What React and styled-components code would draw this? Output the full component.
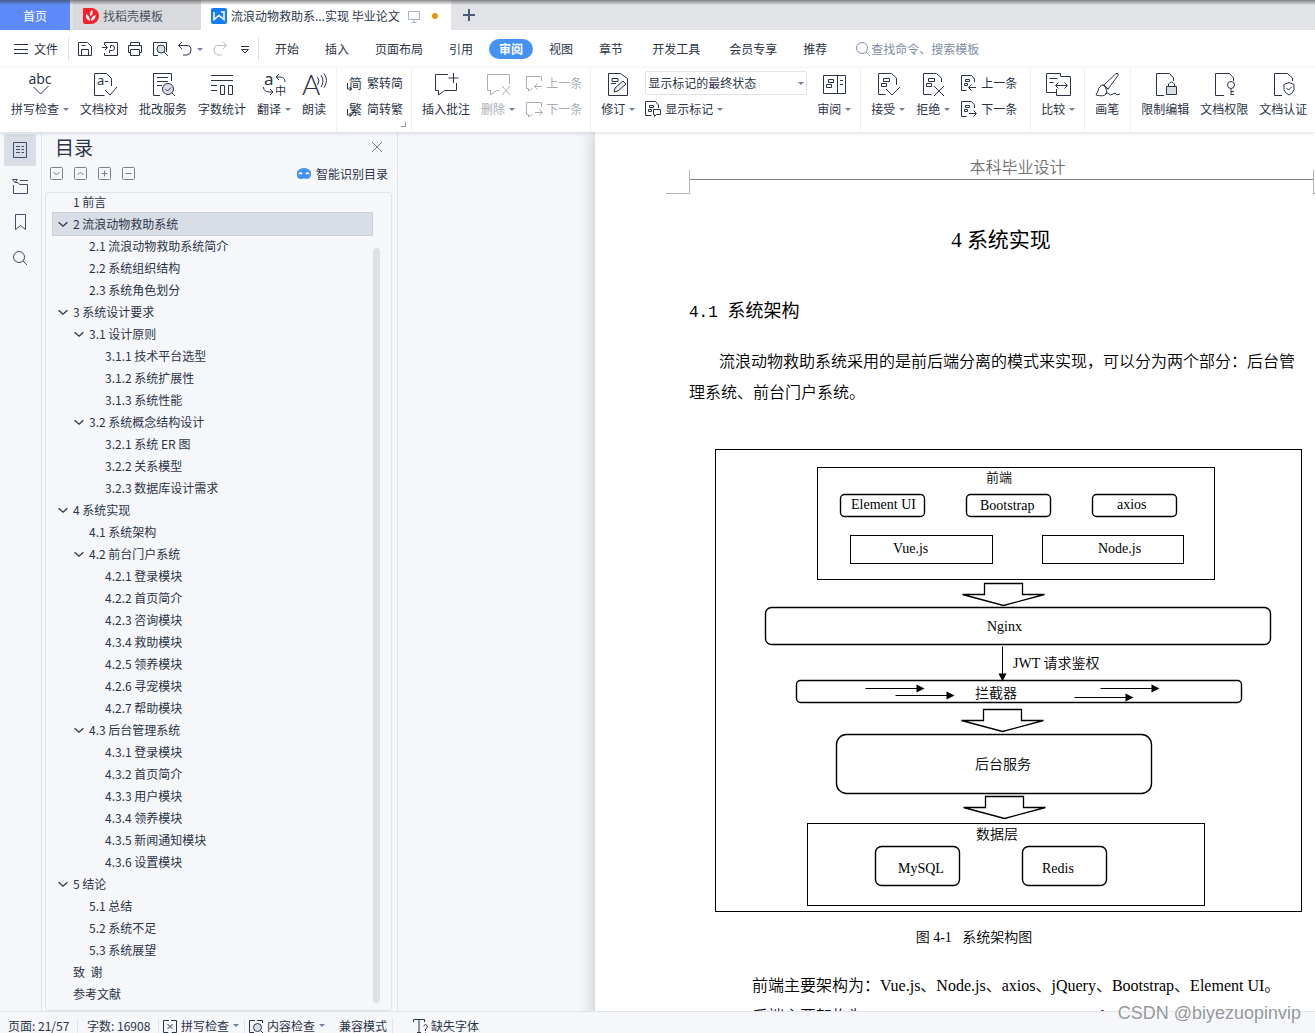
import React, { useState } from 'react';
import styled, { createGlobalStyle } from 'styled-components';

const INK = '#2b3447';
const MUTED = '#a9adb5';
const LINE = '#e1e5eb';

const GlobalStyle = createGlobalStyle`
  * {
    box-sizing: border-box;
  }
  body {
    margin: 0;
    font-family: "Noto Sans CJK SC", "Noto Sans", sans-serif;
    font-size: 12px;
    line-height: 18px;
    color: ${INK};
    background: #f5f7fa;
    overflow: hidden;
  }
  button, input, select {
    font: inherit;
    color: inherit;
    border: 0;
    padding: 0;
    background: none;
  }
`;

/* ---------- icons ---------- */

const Svg = styled.svg`
  display: block;
  flex: none;
  fill: none;
  stroke: currentColor;
  overflow: visible;
  font-family: "Noto Sans", "Noto Sans CJK SC", sans-serif;
  text {
    fill: currentColor;
    stroke: none;
  }
`;

const SHAPES = {
  // ribbon icons, 25px box
  spell: <><text x="12" y="12" fontSize="14" textAnchor="middle">abc</text><path d="M5.5 15l7 7 8-8" /></>,
  proof: <><path d="M19.500 14V6.500l-5-5h-12v22h10M13 18l5 5 7-8" /><text x="5" y="13" fontSize="13">a-</text></>,
  batch: <><path d="M9 23.5H2.5v-22h18V9M6 5.5h11M6 9.5h11M6 13.5h5" /><circle cx="17" cy="17" r="5.5" fill="#d9dee6" /><path d="M21 21l3 3M14.5 17l2 2 3.5-3.500" /></>,
  count: <path d="M1 3.5h22M1 8.5h22M1 13.5h6M1 18.5h6M10.5 13.5h4v9h-4zM18.5 13.5h4v9h-4z" />,
  translate: <><text x="2" y="13" fontSize="17">a</text><text x="13" y="23" fontSize="11">中</text><path d="M17 2l-3 3 3 3M14 5h4q5 0 5 5M1.5 15q0 5 6 5h3M8 17l3 3-3 3" /></>,
  read: <><text x="0" y="23" fontSize="28" fontWeight="300" fontFamily="Lato">A</text><path d="M15.500 5q3 4 0 8M19 3q4 6 0 12M22 1.500q5 7 0 14" /></>,
  addNote: <path d="M14 2.5H1.5v16h3V23l6-4.5h12V11M19.5 1v10M14.5 6h10" />,
  delNote: <path d="M13 18.5h-2.5L4.5 23v-4.5h-3v-16h22V12M16 14l8 9M24 14l-8 9" />,
  revise: <><path d="M14.5 1.5h-12v22h19v-17zM6 6.5h6v3H6zM5 11.5h5" /><path d="M8 20l1-4 8-7 3 3-8 7z" fill="#e3e6eb" /></>,
  pane: <path d="M1.5 3.5h22v18h-22zM15.5 3.5v18M6.5 7.5h5v3h-5zM4.5 12.5h5v3h-5zM18 8.5h3M18 12.5h3" />,
  accept: <path d="M20.5 13V6l-5-4.5h-13v21h7M7.5 6.5h6v3h-6zM5.5 11.5h5v3h-5zM10 17l6 6 8-8" />,
  reject: <path d="M20.5 10V6l-5-4.5h-13v21h8M7.5 6.5h6v3h-6zM5.5 11.5h5v3h-5zM13 14l10 10M23 14L13 24" />,
  compare: <><path d="M14.5 4.5v-3h-14v19h10M3.5 6.5h8M3.5 10.5h4" /><path d="M15 4.5h9.5v19h-14V17M10 13.5h11M12.5 10.5l-3 3 3 3M18.5 10.5l3 3-3 3" /></>,
  pen: <path d="M9 13L21 1.5q3-1 2 2L13 17zM9 13q-5 0-6 6l-2 4q8 2 10-1 2-3-2-9M8 12.500l5 5M10 22q3-2 4 0t4 0 3 0 4 0" />,
  lock: <><path d="M11 23.5H3.5v-22h13l4 4.5v3" /><path d="M13.5 14.5h10v8h-10z" fill="#d9dee6" /><path d="M15.5 14v-2q3-4 6 0v2" /></>,
  key: <><path d="M12 23.5H3.5v-22h14l4 4.5v3" /><circle cx="19" cy="13" r="3.5" /><path d="M19 16.5V23M19 19.5h3M19 22.5h3" /></>,
  shield: <path d="M11 23.5H3.5v-22h13l5 4.5v3M18 10.5l5 2v5q-1 4-5 5.5-4-1.5-5-5.5v-5zM15.5 16l2 2 3.5-3.5" />,
  // small icons, 16px box
  toSimple: <><text x="2" y="13" fontSize="13">简</text><path d="M.5 8v6h4M2.5 12l2 2-2 2" /></>,
  toTrad: <><text x="2" y="13" fontSize="13">繁</text><path d="M.5 8v6h4M2.5 12l2 2-2 2" /></>,
  prevNote: <path d="M15.5 6V1.5H.5v12h2V16l4-2.5M16 11.5H9M11.5 8.5l-3 3 3 3" />,
  nextNote: <path d="M15.5 6V1.5H.5v12h2V16l4-2.5M9 11.5h7M13.5 8.5l3 3-3 3" />,
  prevDoc: <path d="M13.5 7V4l-3-3.5H.5v15h5M4.5 4.5h4v2h-4zM3.5 8.5h3v2h-3zM15 12.5H8M10.5 9.5l-3 3 3 3" />,
  nextDoc: <path d="M13.5 7V4l-3-3.5H.5v15h5M4.5 4.5h4v2h-4zM3.5 8.5h3v2h-3zM8 12.5h7M12.5 9.5l3 3-3 3" />,
  marks: <path d="M13.5 7V4l-3-3.5H.5v14h6M4.5 4.5h4v2h-4zM3.5 8.5h3v2h-3zM8.5 8.5h7v5h-4l-2 2v-2h-1z" />,
  menu: <path d="M1 3.5h14M1 8.5h14M1 12.5h14" />,
  save: <path d="M1.5 1.5h9l4 4v9h-13zM4.5 14.5v-6h7v6M4.5 4.5h4" />,
  exportFile: <path d="M2.5 4V1.5h13v13h-13V12M0 6.5h5M3 4l2.5 2.5L3 9M7.5 12V9.5h3q2 0 2-2.5t-2-2.5h-2V7" />,
  print: <path d="M3.5 4.5v-3h9v3M3.5 11.5h-2v-7h13v7h-2M3.5 8.5h9v6h-9z" />,
  preview: <><path d="M6 14.5H1.5v-13h13V11" /><circle cx="9" cy="8" r="4" fill="#d9dee6" /><path d="M12 11l4 4" /></>,
  undo: <path d="M5 1L1.5 4.5 5 8M1.5 4.5H10q4 0 4 4.5t-4 5H6" />,
  redo: <path d="M11 1l3.5 3.5L11 8M14.5 4.5H6q-4 0-4 4.5t4 5h4" />,
  more: <path d="M4 5.5h8M4.500 8.500h7L8 12z" />,
  find: <><circle cx="7" cy="7" r="5.5" /><path d="M11 11l4 4" /></>,
  outline: <path d="M1.5.5h13v15h-13zM4 4.500h4M4 7.500h4M4 10.500h4M9.500 4.500H12M9.500 7.500H12M9.500 10.500H12" />,
  folder: <><path d="M.5 1.5h5l-2.500 3zM8 2.500h8" /><path d="M1.5 7v8.5h14v-9h-8l-1.5-2H3" /></>,
  bookmark: <path d="M3.5.5h10v15l-5-4-5 4z" />,
  close: <path d="M3 3l10 10M13 3L3 13" />,
  down: <path d="M3 6l5 4.5L13 6" strokeWidth="1.5" />,
  boxDown: <><rect x="1.5" y="1.5" width="12" height="12" rx="1" /><path d="M4.5 6l3 3 3-3" /></>,
  boxUp: <><rect x="1.5" y="1.5" width="12" height="12" rx="1" /><path d="M4.5 9l3-3 3 3" /></>,
  boxPlus: <><rect x="1.5" y="1.5" width="12" height="12" rx="1" /><path d="M4.5 7.5h6M7.5 4.5v6" /></>,
  boxMinus: <><rect x="1.5" y="1.5" width="12" height="12" rx="1" /><path d="M4.5 7.5h6" /></>,
  smart: <><path d="M4 3q4-2 8 0 4 2 3 6-1 4-4 4-3-1-6 0-4 0-4-4-1-4 3-6z" fill="#4592f7" stroke="none" /><path d="M3 8q1.5-2 3 0M10 8q1.5-2 3 0" stroke="#fff" strokeWidth="1.5" /></>,
  monitor: <path d="M2.5 3.5h11v8h-11zM8 11.5v3M5.5 14.5h5" />,
  plus: <path d="M8 2v12M2 8h12" strokeWidth="2" />,
  bookCheck: <path d="M7 2.5H1.5v12H6l2 2 2-2h4.5v-12H9M5.5 6l5 5M10.5 6l-5 5" />,
  bookFind: <><path d="M7 2.5H1.5v12H6M9 2.5h5.5V5" /><circle cx="9.5" cy="9.5" r="4" fill="#d9dee6" /><path d="M12.5 12.5l3 3" /></>,
  missing: <><path d="M1.5 4V1.5h11V4M7 1.5v13M5 14.5h4" /><path d="M11.5 8q2-3 4 0 0 2-2 3v2M13.5 14.5v1" /></>,
};

function Icon({ name, size = 16 }) {
  return <Svg width={size} height={size} viewBox={`0 0 ${size} ${size}`} aria-hidden="true">{SHAPES[name]}</Svg>;
}

const Caret = styled.i`
  flex: none;
  width: 6px;
  margin-left: 4px;
  border: 3px solid transparent;
  border-top-color: #71809c;
  border-bottom: 0;
`;

/* ---------- window ---------- */

const Window = styled.div`
  display: flex;
  flex-direction: column;
  height: 100vh;
  overflow: hidden;
  position: relative;
`;

const TabStrip = styled.nav`
  display: flex;
  height: 30px;
  flex: none;
  background: #e1e3e7;
  position: relative;
  &::after {
    content: "";
    position: absolute;
    inset: 0 0 auto;
    height: 5px;
    background: linear-gradient(rgba(60, 60, 60, 0.6), rgba(60, 60, 60, 0));
  }
`;

const TabButton = styled.button`
  display: flex;
  align-items: center;
  gap: 4px;
  width: ${({ $width }) => $width}px;
  margin-right: ${({ $gap }) => $gap || 0}px;
  padding: 2px 10px 0;
  white-space: nowrap;
  justify-content: ${({ $center }) => ($center ? 'center' : 'flex-start')};
  background: ${({ $bg }) => $bg};
  color: ${({ $color }) => $color || INK};
`;

const Dot = styled.span`
  width: 6px;
  height: 6px;
  margin-left: 6px;
  border-radius: 50%;
  background: #e8960c;
`;

const Faint = styled.span`
  display: flex;
  margin-left: 2px;
  color: #a7b2c6;
`;

const NewTab = styled.button`
  display: flex;
  align-items: center;
  padding: 0 10px;
  color: #4c5b78;
`;

const MenuRow = styled.div`
  display: flex;
  align-items: center;
  flex: none;
  height: 38px;
  padding-left: 13px;
  background: #fff;
`;

const FileButton = styled.button`
  display: flex;
  align-items: center;
  gap: 5px;
  padding-right: 10px;
`;

const QuickBar = styled.div`
  display: flex;
  align-items: center;
  gap: 9px;
  width: 191px;
  height: 24px;
  padding-left: 8px;
  border: solid ${LINE};
  border-width: 0 1px;
`;

const QuickButton = styled.button`
  display: flex;
  align-items: center;
  color: ${({ disabled }) => (disabled ? '#b9bdc5' : INK)};
`;

const MenuTabs = styled.div`
  display: flex;
  margin-left: 3px;
`;

const MenuTab = styled.button`
  height: 20px;
  line-height: 20px;
  padding: 0 10px;
  margin: 0 ${({ $wide }) => ($wide ? 6 : 3)}px;
  border-radius: 10px;
  white-space: nowrap;
  font-weight: ${({ $active }) => ($active ? 700 : 400)};
  color: ${({ $active }) => ($active ? '#fff' : INK)};
  background: ${({ $active }) => ($active ? '#4592f7' : 'none')};
`;

const Search = styled.label`
  display: flex;
  align-items: center;
  flex: 1;
  margin-left: 15px;
  color: #8794ad;
  input {
    flex: 1;
    outline: 0;
  }
  input::placeholder {
    color: #7f8ca5;
    opacity: 1;
  }
`;

const Ribbon = styled.div`
  display: flex;
  flex: none;
  height: 64px;
  padding-left: 1px;
  background: #fff;
  position: relative;
  z-index: 1;
  box-shadow: 0 1px 4px rgba(40, 50, 70, 0.18);
`;

const Group = styled.div`
  display: flex;
  flex: none;
  gap: ${({ $gap }) => $gap || 11}px;
  padding: 4px ${({ $end }) => $end || 9}px 0 10px;
  border-right: 1px solid #eef0f3;
  position: relative;
`;

const Tool = styled.button`
  display: flex;
  flex-direction: column;
  gap: 3px;
  height: 46px;
  white-space: nowrap;
  color: ${({ disabled }) => (disabled ? MUTED : INK)};
`;

const ToolIcon = styled.span`
  display: flex;
  justify-content: center;
  width: 100%;
`;

const ToolLabel = styled.span`
  display: flex;
  align-items: center;
`;

const Stack = styled.div`
  display: flex;
  flex-direction: column;
  gap: 2px;
  margin-top: -1px;
`;

const SmallTool = styled.button`
  display: flex;
  align-items: center;
  gap: 4px;
  height: 24px;
  white-space: nowrap;
  color: ${({ disabled }) => (disabled ? MUTED : INK)};
  ${Caret} {
    margin-left: 0;
  }
`;

const Launcher = styled.span`
  position: absolute;
  right: 5px;
  bottom: 5px;
  width: 5px;
  height: 5px;
  border: solid #8c96a8;
  border-width: 0 1px 1px 0;
`;

const SelectBox = styled.div`
  position: relative;
  select {
    display: block;
    appearance: none;
    width: 162px;
    height: 24px;
    padding-left: 2px;
    border: 1px solid #dfe2e7;
    border-radius: 2px;
  }
  ${Caret} {
    position: absolute;
    right: 3px;
    top: 11px;
  }
`;

/* ---------- body ---------- */

const Body = styled.div`
  display: flex;
  flex: 1;
  min-height: 0;
`;

const Rail = styled.nav`
  display: flex;
  flex-direction: column;
  gap: 4px;
  flex: none;
  width: 42px;
  padding: 2px 4px;
  border-right: 1px solid ${LINE};
`;

const RailButton = styled.button`
  display: flex;
  align-items: center;
  justify-content: center;
  width: 32px;
  height: 32px;
  border-radius: 2px;
  color: #414d66;
  background: ${({ $active }) => ($active ? '#d9dee6' : 'none')};
`;

const Panel = styled.aside`
  display: flex;
  flex-direction: column;
  flex: none;
  width: 356px;
  padding: 0 5px 0 3px;
  border-right: 1px solid ${LINE};
`;

const PanelHead = styled.header`
  display: flex;
  align-items: center;
  justify-content: space-between;
  height: 30px;
  padding: 0 7px 0 10px;
  h2 {
    margin: 0;
    font-size: 19px;
    font-weight: 400;
  }
  button {
    color: #6d7789;
  }
`;

const PanelTools = styled.div`
  display: flex;
  align-items: center;
  gap: 8px;
  height: 24px;
  padding: 0 4px;
  margin-bottom: 6px;
  color: #7b808a;
`;

const SmartLink = styled.button`
  display: flex;
  align-items: center;
  gap: 4px;
  margin-left: auto;
  color: ${INK};
`;

const TreeBox = styled.div`
  display: flex;
  flex: 1;
  min-height: 0;
  overflow: hidden;
  padding-left: 7px;
  border: 1px solid ${LINE};
  border-radius: 3px;
`;

const Tree = styled.ul`
  flex: 1;
  list-style: none;
  margin: -2px 0 0;
  padding: 0;
`;

const TreeItem = styled.li`
  display: flex;
  align-items: center;
  height: 22px;
  padding-left: ${({ $level }) => $level * 16}px;
  white-space: pre;
  background: ${({ $active }) => ($active ? '#d9dee6' : 'none')};
  box-shadow: ${({ $active }) => ($active ? '0 0 0 1px #cbd1da' : 'none')};
`;

const Twist = styled.button`
  display: flex;
  justify-content: center;
  width: 20px;
  height: 12px;
  align-items: center;
  svg {
    width: 14px;
  }
`;

const Thumb = styled.div`
  width: 7px;
  margin: 55px 11px 7px 1px;
  border-radius: 4px;
  background: #dde1e5;
`;

const Canvas = styled.main`
  flex: 1;
  min-width: 0;
  overflow: hidden;
  padding-left: 197px;
`;

const Sheet = styled.article`
  width: 812px;
  min-height: 100%;
  background: #fff;
  color: #000;
  box-shadow: 0 0 16px rgba(40, 50, 70, 0.28);
  font-family: "Liberation Serif", "Noto Sans CJK SC", serif;
  font-weight: 350;
  font-size: 16px;
  line-height: 31px;
`;

const PageTop = styled.div`
  display: grid;
  grid-template-columns: 24px 1fr 24px;
  align-items: end;
  padding: 26px 70px 0 71px;
`;

const Corner = styled.i`
  height: 24px;
  border: solid #b5b5b5;
  border-width: 0 0 1px;
  border-right-width: ${({ $left }) => ($left ? 1 : 0)}px;
  border-left-width: ${({ $left }) => ($left ? 0 : 1)}px;
`;

const RunningHead = styled.p`
  margin: 0 0 14px;
  padding: 0 0 1px 32px;
  line-height: 20px;
  text-align: center;
  color: #707070;
  border-bottom: 1px solid #808080;
`;

const PageText = styled.div`
  padding: 0 94px;
  h1 {
    margin: 31px 0 41px;
    font-size: 21px;
    line-height: 30px;
    font-weight: 400;
    text-align: center;
  }
  h2 {
    margin: 0 0 18px;
    font-size: 18px;
    line-height: 30px;
    font-weight: 400;
    white-space: pre;
  }
`;

const Mono = styled.span`
  font-family: "Liberation Mono", monospace;
  font-size: 16px;
`;

const Paragraph = styled.p`
  margin: 0;
  padding-right: 8px;
  text-indent: 30px;
`;

const Listing = styled.p`
  margin: 0;
  padding-left: 63px;
  white-space: nowrap;
`;

const Figure = styled.figure`
  margin: 41px 0 22px 26px;
  svg {
    display: block;
    font-size: 14px;
  }
  figcaption {
    margin-top: 16px;
    padding-right: 80px;
    font-size: 14px;
    line-height: 20px;
    text-align: center;
    white-space: pre;
  }
`;

const Watermark = styled.div`
  position: absolute;
  right: 14px;
  bottom: 7px;
  z-index: 2;
  font: 18px/26px "Liberation Sans", sans-serif;
  color: rgba(130, 132, 136, 0.85);
  text-shadow: 1px 1px 0 #fff;
`;

const StatusBar = styled.footer`
  display: flex;
  flex: none;
  height: 22px;
  padding: 6px 0 0 8px;
  line-height: 14px;
  border-top: 1px solid #dfe3ea;
`;

const StatusItem = styled.span`
  display: flex;
  align-items: center;
  gap: 3px;
  width: ${({ $width }) => $width}px;
  margin-right: ${({ $gap }) => $gap}px;
  white-space: nowrap;
  border-right: ${({ $plain }) => ($plain ? 0 : 1)}px solid ${LINE};
  ${Caret} {
    margin-left: 1px;
  }
`;

/* ---------- data ---------- */

const MENU = ['开始', '插入', '页面布局', '引用', '审阅', '视图', '章节', '开发工具', '会员专享', '推荐'];

const OUTLINE = [
  [0, '1 前言'],
  [0, '2 流浪动物救助系统', true],
  [1, '2.1 流浪动物救助系统简介'],
  [1, '2.2 系统组织结构'],
  [1, '2.3 系统角色划分'],
  [0, '3 系统设计要求', true],
  [1, '3.1 设计原则', true],
  [2, '3.1.1 技术平台选型'],
  [2, '3.1.2 系统扩展性'],
  [2, '3.1.3 系统性能'],
  [1, '3.2 系统概念结构设计', true],
  [2, '3.2.1 系统 ER 图'],
  [2, '3.2.2 关系模型'],
  [2, '3.2.3 数据库设计需求'],
  [0, '4 系统实现', true],
  [1, '4.1 系统架构'],
  [1, '4.2 前台门户系统', true],
  [2, '4.2.1 登录模块'],
  [2, '4.2.2 首页简介'],
  [2, '4.2.3 咨询模块'],
  [2, '4.3.4 救助模块'],
  [2, '4.2.5 领养模块'],
  [2, '4.2.6 寻宠模块'],
  [2, '4.2.7 帮助模块'],
  [1, '4.3 后台管理系统', true],
  [2, '4.3.1 登录模块'],
  [2, '4.3.2 首页简介'],
  [2, '4.3.3 用户模块'],
  [2, '4.3.4 领养模块'],
  [2, '4.3.5 新闻通知模块'],
  [2, '4.3.6 设置模块'],
  [0, '5 结论', true],
  [1, '5.1 总结'],
  [1, '5.2 系统不足'],
  [1, '5.3 系统展望'],
  [0, '致  谢'],
  [0, '参考文献'],
];

// x, y, width, height, corner radius
const BOXES = [
  [0, 0, 586, 462, 0],
  [102, 18, 397, 112, 0],
  [125, 45, 84, 22, 4],
  [251, 45, 84, 22, 4],
  [377, 45, 84, 22, 4],
  [135, 86, 142, 28, 0],
  [327, 86, 141, 28, 0],
  [50, 158, 505, 37, 6],
  [81, 231, 445, 22, 4],
  [121, 285, 315, 59, 10],
  [92, 374, 397, 82, 0],
  [160, 397, 84, 39, 6],
  [307, 397, 84, 39, 6],
];

// x, baseline, text
const LABELS = [
  [271, 33, '前端', 13],
  [136, 60, 'Element UI'],
  [265, 61, 'Bootstrap'],
  [402, 60, 'axios'],
  [178, 104, 'Vue.js'],
  [383, 104, 'Node.js'],
  [272, 182, 'Nginx'],
  [298, 219, 'JWT 请求鉴权'],
  [260, 249, '拦截器'],
  [260, 320, '后台服务'],
  [261, 390, '数据层'],
  [183, 424, 'MySQL'],
  [327, 424, 'Redis'],
];

const BLOCK_ARROWS = [[288, 134], [287, 260], [289, 347]];
const FLOWS = [[150, 239], [180, 246], [385, 239], [359, 248]];

/* ---------- parts ---------- */

function BigTool({ icon, label, menu, disabled }) {
  return (
    <Tool disabled={disabled}>
      <ToolIcon><Icon name={icon} size={25} /></ToolIcon>
      <ToolLabel>{label}{menu && <Caret />}</ToolLabel>
    </Tool>
  );
}

function RowTool({ icon, label, menu, disabled }) {
  return (
    <SmallTool disabled={disabled}>
      <Icon name={icon} />
      {label}
      {menu && <Caret />}
    </SmallTool>
  );
}

function Diagram() {
  return (
    <svg width="588" height="463" role="img" aria-label="系统架构图">
      <g fill="#fff" stroke="#000" strokeWidth="1" transform="translate(.5 .5)">
        {BOXES.map(([x, y, w, h, r]) => (
          <rect key={`${x}-${y}`} x={x} y={y} width={w} height={h} rx={r} strokeWidth={r ? 1.4 : 1} />
        ))}
        {BLOCK_ARROWS.map(([x, y]) => (
          <path key={y} strokeWidth="1.3" d={`M${x - 19} ${y}h38v11h22l-41 11-41-11h22z`} />
        ))}
        <path d="M287 197v28" />
        <path fill="#000" stroke="none" d="M283 224h8l-4 8z" />
        {FLOWS.map(([x, y]) => (
          <g key={x}>
            <path d={`M${x} ${y}h52`} />
            <path fill="#000" stroke="none" d={`M${x + 51} ${y - 4}l8 4-8 4z`} />
          </g>
        ))}
      </g>
      {LABELS.map(([x, y, text, size]) => <text key={text} x={x} y={y} fontSize={size}>{text}</text>)}
    </svg>
  );
}

function TopBar() {
  const [tab, setTab] = useState('审阅');
  return (
    <>
      <TabStrip>
        <TabButton $width={70} $gap={3} $center $bg="#5c8bf9" $color="#fff">首页</TabButton>
        <TabButton $width={128} $bg="#d9dadd" $color="#4c525f">
          <Svg width="16" height="16" viewBox="0 0 16 16" aria-hidden="true">
            <path d="M1 0h7a8 8 0 010 16H2Q0 16 0 14V1q0-1 1-1z" fill="#f5222d" stroke="none" />
            <path d="M7 13Q2 11 3 6q4 2 4 7zM7.5 8Q6 5 9 2q2 4-1.5 6zM8 13q0-5 5-6-1 5-5 6z" fill="#fff" stroke="none" />
          </Svg>
          找稻壳模板
        </TabButton>
        <TabButton $width={250} $bg="#fff">
          <Svg width="16" height="16" viewBox="0 0 16 16" aria-hidden="true">
            <rect width="16" height="16" rx="2" fill="#147cf5" stroke="none" />
            <path d="M3 4v7.5l5-4 5 4V4h-3" stroke="#fff" strokeWidth="1.6" />
          </Svg>
          流浪动物救助系...实现 毕业论文
          <Faint><Icon name="monitor" /></Faint>
          <Dot />
        </TabButton>
        <NewTab aria-label="新建"><Icon name="plus" /></NewTab>
      </TabStrip>
      <MenuRow>
        <FileButton><Icon name="menu" />文件</FileButton>
        <QuickBar>
          <QuickButton aria-label="保存"><Icon name="save" /></QuickButton>
          <QuickButton aria-label="输出"><Icon name="exportFile" /></QuickButton>
          <QuickButton aria-label="打印"><Icon name="print" /></QuickButton>
          <QuickButton aria-label="预览"><Icon name="preview" /></QuickButton>
          <QuickButton aria-label="撤销"><Icon name="undo" /><Caret /></QuickButton>
          <QuickButton aria-label="恢复" disabled><Icon name="redo" /></QuickButton>
          <QuickButton aria-label="更多"><Icon name="more" /></QuickButton>
        </QuickBar>
        <MenuTabs>
          {MENU.map((name) => (
            <MenuTab key={name} $active={name === tab} $wide={name === '开发工具'} onClick={() => setTab(name)}>
              {name}
            </MenuTab>
          ))}
        </MenuTabs>
        <Search>
          <Icon name="find" />
          <input type="text" aria-label="搜索" placeholder="查找命令、搜索模板" />
        </Search>
      </MenuRow>
      <Ribbon>
        <Group>
          <BigTool icon="spell" label="拼写检查" menu />
          <BigTool icon="proof" label="文档校对" />
          <BigTool icon="batch" label="批改服务" />
          <BigTool icon="count" label="字数统计" />
          <BigTool icon="translate" label="翻译" menu />
          <BigTool icon="read" label="朗读" />
        </Group>
        <Group $end={8}>
          <Stack>
            <RowTool icon="toSimple" label="繁转简" />
            <RowTool icon="toTrad" label="简转繁" />
          </Stack>
          <Launcher />
        </Group>
        <Group $end={8}>
          <BigTool icon="addNote" label="插入批注" />
          <BigTool icon="delNote" label="删除" menu disabled />
          <Stack>
            <RowTool icon="prevNote" label="上一条" disabled />
            <RowTool icon="nextNote" label="下一条" disabled />
          </Stack>
        </Group>
        <Group $gap={10}>
          <BigTool icon="revise" label="修订" menu />
          <Stack>
            <SelectBox>
              <select aria-label="标记状态">
                <option>显示标记的最终状态</option>
                <option>最终状态</option>
                <option>原始状态</option>
              </select>
              <Caret />
            </SelectBox>
            <RowTool icon="marks" label="显示标记" menu />
          </Stack>
          <BigTool icon="pane" label="审阅" menu />
        </Group>
        <Group $end={13}>
          <BigTool icon="accept" label="接受" menu />
          <BigTool icon="reject" label="拒绝" menu />
          <Stack>
            <RowTool icon="prevDoc" label="上一条" />
            <RowTool icon="nextDoc" label="下一条" />
          </Stack>
        </Group>
        <Group><BigTool icon="compare" label="比较" menu /></Group>
        <Group $end={10}><BigTool icon="pen" label="画笔" /></Group>
        <Group>
          <BigTool icon="lock" label="限制编辑" />
          <BigTool icon="key" label="文档权限" />
          <BigTool icon="shield" label="文档认证" />
        </Group>
      </Ribbon>
    </>
  );
}

function OutlinePanel() {
  const [current, setCurrent] = useState(1);
  return (
    <Panel>
      <PanelHead>
        <h2>目录</h2>
        <button aria-label="关闭"><Icon name="close" /></button>
      </PanelHead>
      <PanelTools>
        <button aria-label="展开"><Icon name="boxDown" /></button>
        <button aria-label="收起"><Icon name="boxUp" /></button>
        <button aria-label="增加"><Icon name="boxPlus" /></button>
        <button aria-label="减少"><Icon name="boxMinus" /></button>
        <SmartLink><Icon name="smart" />智能识别目录</SmartLink>
      </PanelTools>
      <TreeBox>
        <Tree>
          {OUTLINE.map(([level, text, open], i) => (
            <TreeItem key={text} $level={level} $active={i === current} onClick={() => setCurrent(i)}>
              <Twist as={open ? 'button' : 'span'}>{open && <Icon name="down" />}</Twist>
              {text}
            </TreeItem>
          ))}
        </Tree>
        <Thumb />
      </TreeBox>
    </Panel>
  );
}

function App() {
  return (
    <Window>
      <GlobalStyle />
      <TopBar />
      <Body>
        <Rail>
          <RailButton $active aria-label="目录"><Icon name="outline" /></RailButton>
          <RailButton aria-label="章节"><Icon name="folder" /></RailButton>
          <RailButton aria-label="书签"><Icon name="bookmark" /></RailButton>
          <RailButton aria-label="查找"><Icon name="find" /></RailButton>
        </Rail>
        <OutlinePanel />
        <Canvas>
          <Sheet>
            <PageTop>
              <Corner $left />
              <RunningHead>本科毕业设计</RunningHead>
              <Corner />
            </PageTop>
            <PageText>
              <h1>4 系统实现</h1>
              <h2><Mono>4.1 </Mono>系统架构</h2>
              <Paragraph>
                流浪动物救助系统采用的是前后端分离的模式来实现，可以分为两个部分：后台管理系统、前台门户系统。
              </Paragraph>
              <Figure>
                <Diagram />
                <figcaption>图 4-1   系统架构图</figcaption>
              </Figure>
              <Listing>前端主要架构为：Vue.js、Node.js、axios、jQuery、Bootstrap、Element UI。</Listing>
              <Listing>后端主要架构为：Spring、Spring Boot、MyBatis Plus、Redis、MySQL。</Listing>
            </PageText>
          </Sheet>
        </Canvas>
      </Body>
      <StatusBar>
        <StatusItem $width={70} $gap={9}>页面: 21/57</StatusItem>
        <StatusItem $width={72} $gap={3}>字数: 16908</StatusItem>
        <StatusItem $width={83} $gap={3}><Icon name="bookCheck" />拼写检查<Caret /></StatusItem>
        <StatusItem $width={82} $gap={9} $plain><Icon name="bookFind" />内容检查<Caret /></StatusItem>
        <StatusItem $width={54} $gap={19}>兼容模式</StatusItem>
        <StatusItem $width={80} $gap={0} $plain><Icon name="missing" />缺失字体</StatusItem>
      </StatusBar>
      <Watermark>CSDN @biyezuopinvip</Watermark>
    </Window>
  );
}

export default App;
